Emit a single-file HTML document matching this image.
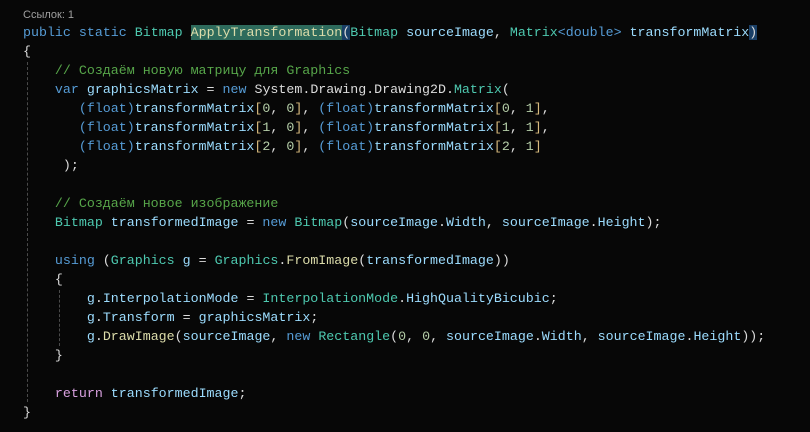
<!DOCTYPE html>
<html><head><meta charset="utf-8"><style>
html,body{margin:0;padding:0;background:#070707;width:810px;height:432px;overflow:hidden}
.ref{position:absolute;left:23px;top:9px;font:11px "Liberation Sans","DejaVu Sans",sans-serif;color:#a0a0a0}
pre{position:absolute;left:23px;top:23px;margin:0;font:13.3px/19px "Liberation Mono",monospace;color:#dcdcdc}
.k{color:#569cd6}.t{color:#4ec9b0}.m{color:#dcdcaa}.v{color:#9cdcfe}.c{color:#57a64a}.p{color:#d8a0df}.n{color:#b5cea8}.b{color:#d7ba7d}
.hl{background:#2e6b5c}.pb{background:#1a3f66}
.g{position:absolute;width:0;border-left:1px dashed #4a4a4a}
</style></head><body>
<div class="ref">Ссылок: 1</div>
<div class="g" style="left:27px;top:62px;height:340px"></div>
<div class="g" style="left:59px;top:290px;height:56px"></div>
<pre><span class="k">public</span> <span class="k">static</span> <span class="t">Bitmap</span> <span class="m hl">ApplyTransformation</span><span class="pb">(</span><span class="t">Bitmap</span> <span class="v">sourceImage</span>, <span class="t">Matrix</span><span class="k">&lt;double&gt;</span> <span class="v">transformMatrix</span><span class="pb">)</span>
{
    <span class="c">// Создаём новую матрицу для Graphics</span>
    <span class="k">var</span> <span class="v">graphicsMatrix</span> = <span class="k">new</span> System.Drawing.Drawing2D.<span class="t">Matrix</span>(
       <span class="k">(float)</span><span class="v">transformMatrix</span><span class="b">[</span><span class="n">0</span>, <span class="n">0</span><span class="b">]</span>, <span class="k">(float)</span><span class="v">transformMatrix</span><span class="b">[</span><span class="n">0</span>, <span class="n">1</span><span class="b">]</span>,
       <span class="k">(float)</span><span class="v">transformMatrix</span><span class="b">[</span><span class="n">1</span>, <span class="n">0</span><span class="b">]</span>, <span class="k">(float)</span><span class="v">transformMatrix</span><span class="b">[</span><span class="n">1</span>, <span class="n">1</span><span class="b">]</span>,
       <span class="k">(float)</span><span class="v">transformMatrix</span><span class="b">[</span><span class="n">2</span>, <span class="n">0</span><span class="b">]</span>, <span class="k">(float)</span><span class="v">transformMatrix</span><span class="b">[</span><span class="n">2</span>, <span class="n">1</span><span class="b">]</span>
     );

    <span class="c">// Создаём новое изображение</span>
    <span class="t">Bitmap</span> <span class="v">transformedImage</span> = <span class="k">new</span> <span class="t">Bitmap</span>(<span class="v">sourceImage</span>.<span class="v">Width</span>, <span class="v">sourceImage</span>.<span class="v">Height</span>);

    <span class="k">using</span> (<span class="t">Graphics</span> <span class="v">g</span> = <span class="t">Graphics</span>.<span class="m">FromImage</span>(<span class="v">transformedImage</span>))
    {
        <span class="v">g</span>.<span class="v">InterpolationMode</span> = <span class="t">InterpolationMode</span>.<span class="v">HighQualityBicubic</span>;
        <span class="v">g</span>.<span class="v">Transform</span> = <span class="v">graphicsMatrix</span>;
        <span class="v">g</span>.<span class="m">DrawImage</span>(<span class="v">sourceImage</span>, <span class="k">new</span> <span class="t">Rectangle</span>(<span class="n">0</span>, <span class="n">0</span>, <span class="v">sourceImage</span>.<span class="v">Width</span>, <span class="v">sourceImage</span>.<span class="v">Height</span>));
    }

    <span class="p">return</span> <span class="v">transformedImage</span>;
}</pre>
</body></html>
